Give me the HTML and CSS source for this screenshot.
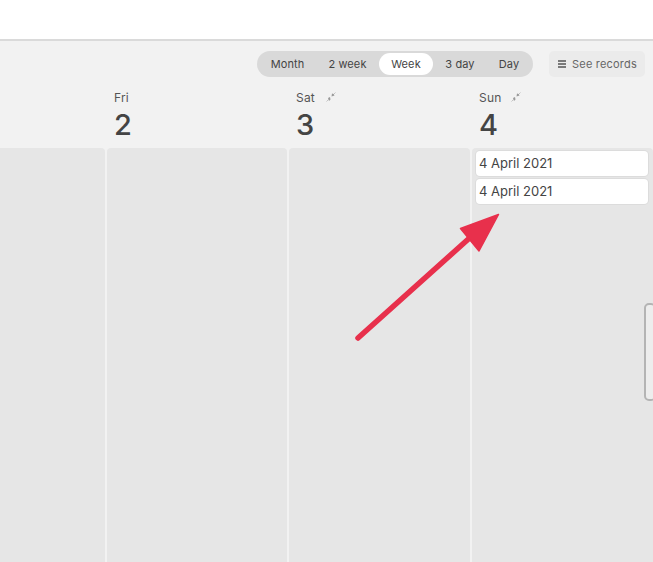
FILE: index.html
```html
<!DOCTYPE html>
<html lang="en">
<head>
<meta charset="utf-8">
<title>Calendar</title>
<link rel="stylesheet" href="styles.css">
</head>
<body>
<div class="app">
  <header class="topbar"></header>
  <div class="toolbar">
    <div class="segments">
      <span class="segment month">Month</span>
      <span class="segment two-week">2 week</span>
      <span class="segment active">Week</span>
      <span class="segment">3 day</span>
      <span class="segment day">Day</span>
    </div>
    <button class="records">
      <svg class="records-icon" width="8" height="8" viewBox="0 0 8 8"><path d="M0 1h8M0 4h8M0 7h8" stroke="#555" stroke-width="1.300" fill="none"/></svg>
      See records
    </button>
  </div>
  <div class="days">
    <div class="day-head"></div>
    <div class="day-head">
      <div class="day-name">Fri</div>
      <div class="day-num">2</div>
    </div>
    <div class="day-head">
      <div class="day-name">Sat
        <svg class="collapse" width="12" height="12" viewBox="0 0 12 12"><path d="M1.500 10.500l2-2M8 4l2.500-2.500" stroke="#c4c4c4" stroke-width="1" fill="none"/><path d="M3 7l2-1 .5 2.500-1.500 1.500zM6.500 5.500l.5-3 1.500 .5 1 1.500z" fill="#9a9a9a"/></svg>
      </div>
      <div class="day-num">3</div>
    </div>
    <div class="day-head">
      <div class="day-name sun">Sun
        <svg class="collapse" width="12" height="12" viewBox="0 0 12 12"><path d="M1.500 10.500l2-2M8 4l2.500-2.500" stroke="#c4c4c4" stroke-width="1" fill="none"/><path d="M3 7l2-1 .5 2.500-1.500 1.500zM6.500 5.500l.5-3 1.500 .5 1 1.500z" fill="#9a9a9a"/></svg>
      </div>
      <div class="day-num">4</div>
    </div>
  </div>
  <div class="columns">
    <div class="column first"></div>
    <div class="column"></div>
    <div class="column"></div>
    <div class="column">
      <div class="card">4 April 2021</div>
      <div class="card">4 April 2021</div>
    </div>
  </div>
  <div class="handle"></div>
  <svg class="arrow" width="653" height="562" viewBox="0 0 653 562">
    <path d="M358 338L474 234" stroke="#e8304c" stroke-width="5.500" stroke-linecap="round" fill="none"/>
    <path d="M498.500 214.500L460.500 228.500L479 251Z" fill="#e8304c" stroke="#e8304c" stroke-width="1.500" stroke-linejoin="round"/>
  </svg>
</div>
</body>
</html>
```
FILE: styles.css
```css
* { box-sizing: border-box; }
html, body { margin: 0; height: 100%; }
body { font-family: Inter, "Liberation Sans", sans-serif; color: #444; overflow: hidden; }
.app { position: relative; width: 653px; height: 562px; background: #f2f2f2; display: flex; flex-direction: column; overflow: hidden; }
.topbar { height: 41px; flex: none; background: #fff; border-bottom: 2px solid #dadada; }
.toolbar { height: 26px; flex: none; margin-top: 10px; display: flex; justify-content: flex-end; gap: 16px; padding-right: 8px; }
.segments { width: 276px; display: flex; align-items: center; background: #d9d9d9; border-radius: 13px; padding: 0 2px; font-size: 11px; letter-spacing: 0.1px; }
.segment { height: 22px; flex: none; display: flex; align-items: center; justify-content: center; width: 54px; color: #444; }
.segment.month { width: 57px; }
.segment.two-week { width: 63px; }
.segment.day { width: 44px; }
.segment.active { background: #fff; border-radius: 11px; }
.records { width: 96px; height: 26px; border: 0; border-radius: 5px; background: #ebebeb; color: #666; font: inherit; font-size: 11px; letter-spacing: 0.2px; display: flex; align-items: center; justify-content: center; gap: 6px; padding: 0 0 0 1px; }
.days { display: grid; grid-template-columns: 105px 180px 181px 181px; column-gap: 2px; height: 71px; flex: none; }
.day-head { padding: 13px 0 0 7px; }
.day-name { font-size: 12px; letter-spacing: 0.2px; line-height: 15px; height: 15px; color: #555; display: flex; align-items: center; gap: 10px; }
.day-name.sun { gap: 8px; }
.day-num { font-size: 29px; font-weight: 500; line-height: 35px; margin-top: 2px; color: #444; }
.collapse { flex: none; margin-top: -1px; }
.columns { flex: 1; display: grid; grid-template-columns: 105px 180px 181px 181px; column-gap: 2px; }
.column { background: #e6e6e6; border-radius: 4px 4px 0 0; padding: 3px 4px; display: flex; flex-direction: column; gap: 3px; }
.column.first { border-top-left-radius: 0; }
.card { height: 25px; width: 172px; background: #fff; border-radius: 4px; box-shadow: 0 0 0 1px #dcdcdc; font-size: 13px; line-height: 25px; padding-left: 3px; color: #444; }
.handle { position: absolute; left: 644px; top: 303px; width: 12px; height: 98px; border: 2px solid #b4b4b4; border-radius: 5px; background: #ededed; }
.arrow { position: absolute; left: 0; top: 0; pointer-events: none; }
```
